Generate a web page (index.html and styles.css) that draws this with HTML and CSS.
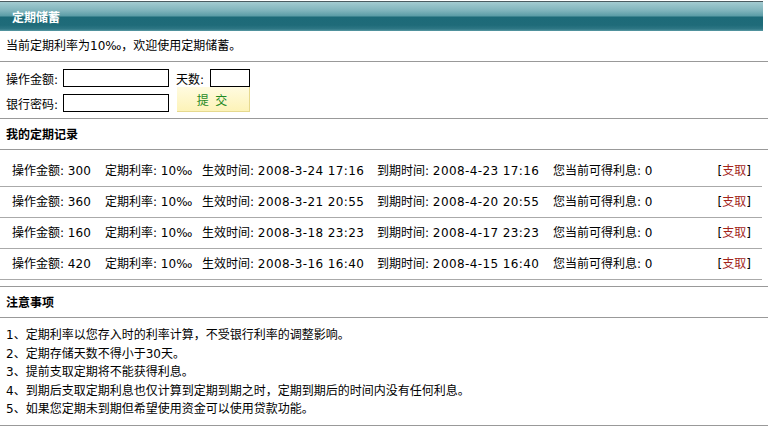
FILE: index.html
```html
<!DOCTYPE html>
<html lang="zh-CN">
<head>
<meta charset="utf-8">
<title>定期储蓄</title>
<link rel="stylesheet" href="styles.css">
</head>
<body>
<div class="page">
  <div class="title-bar"><span class="title-text">定期储蓄</span></div>
  <div class="intro">当前定期利率为10‰，欢迎使用定期储蓄。</div>
  <form class="deposit-form">
    <span class="label">操作金额:</span>
    <input class="field field-wide" type="text">
    <span class="days"><span class="label">天数:</span><input class="field field-small" type="text"></span>
    <span class="label row2">银行密码:</span>
    <input class="field field-wide row2" type="password">
    <button class="submit row2" type="button">提 交</button>
  </form>
  <div class="section-head">我的定期记录</div>
  <div class="records">
    <div class="record">
      <span>操作金额: 300</span><span>定期利率: 10‰</span><span>生效时间: <span class="num">2008-3-24 17:16</span></span><span>到期时间: <span class="num">2008-4-23 17:16</span></span><span>您当前可得利息: 0</span><span class="act">[<a href="#">支取</a>]</span>
    </div>
    <div class="record">
      <span>操作金额: 360</span><span>定期利率: 10‰</span><span>生效时间: <span class="num">2008-3-21 20:55</span></span><span>到期时间: <span class="num">2008-4-20 20:55</span></span><span>您当前可得利息: 0</span><span class="act">[<a href="#">支取</a>]</span>
    </div>
    <div class="record">
      <span>操作金额: 160</span><span>定期利率: 10‰</span><span>生效时间: <span class="num">2008-3-18 23:23</span></span><span>到期时间: <span class="num">2008-4-17 23:23</span></span><span>您当前可得利息: 0</span><span class="act">[<a href="#">支取</a>]</span>
    </div>
    <div class="record">
      <span>操作金额: 420</span><span>定期利率: 10‰</span><span>生效时间: <span class="num">2008-3-16 16:40</span></span><span>到期时间: <span class="num">2008-4-15 16:40</span></span><span>您当前可得利息: 0</span><span class="act">[<a href="#">支取</a>]</span>
    </div>
  </div>
  <div class="section-head">注意事项</div>
  <ol class="notes">
    <li>1、定期利率以您存入时的利率计算，不受银行利率的调整影响。</li>
    <li>2、定期存储天数不得小于30天。</li>
    <li>3、提前支取定期将不能获得利息。</li>
    <li>4、到期后支取定期利息也仅计算到定期到期之时，定期到期后的时间内没有任何利息。</li>
    <li>5、如果您定期未到期但希望使用资金可以使用贷款功能。</li>
  </ol>
</div>
</body>
</html>
```
FILE: styles.css
```css
html, body {
  margin: 0;
  padding: 0;
  background: #fff;
}
body {
  font-family: "DejaVu Sans", "Noto Sans CJK SC", sans-serif;
  font-size: 12px;
  color: #000;
}
.page {
  width: 768px;
  padding-top: 1px;
}
.title-bar {
  width: 763px;
  height: 30px;
  border-top: 1px solid #4b5b60;
  background: linear-gradient(to bottom, #a3cbd1 0%, #7fb3bb 30%, #5b9ca6 48%, #1d6a78 52%, #1f6b79 80%, #2e7785 93%, #5a9aa4 100%);
  display: flex;
  align-items: center;
  padding-left: 12px;
  box-sizing: border-box;
}
.title-text {
  color: #fff;
  font-weight: 700;
  font-family: "Noto Sans CJK SC", sans-serif;
  font-size: 12px;
}
.intro {
  height: 30px;
  line-height: 30px;
  padding-left: 6px;
  border-bottom: 1px solid #999;
}
.deposit-form {
  display: grid;
  grid-template-columns: 57px 106px 81px;
  grid-template-rows: 18px 25px;
  column-gap: 0;
  padding: 7px 0 6px 6px;
  margin: 0;
  border-bottom: 1px solid #999;
  align-items: center;
}
.label {
  white-space: nowrap;
}
.field {
  box-sizing: border-box;
  height: 18px;
  border: 1px solid #000;
  padding: 0;
  margin: 0;
  background: #fff;
}
.field-wide {
  width: 106px;
}
.field-small {
  width: 40px;
  margin-left: 6px;
}
.days {
  display: flex;
  align-items: center;
  padding-left: 7px;
}
.row2 {
  align-self: end;
}
.deposit-form .submit {
  margin-left: 8px;
  width: 73px;
  height: 25px;
  border: none;
  border-right: 1px solid #e6d98e;
  border-bottom: 1px solid #e6d98e;
  background: linear-gradient(to bottom, #fffbe0, #fdf3b8);
  color: #1f8a1f;
  font-family: "Noto Sans CJK SC", sans-serif;
  font-size: 12px;
  letter-spacing: 2px;
  padding: 0;
}
.section-head {
  height: 30px;
  line-height: 30px;
  padding-left: 6px;
  font-weight: 700;
  font-family: "Noto Sans CJK SC", sans-serif;
  border-bottom: 1px solid #999;
}
.records {
  padding: 6px 0;
  border-bottom: 1px solid #999;
}
.record {
  width: 762px;
  box-sizing: border-box;
  height: 31px;
  line-height: 30px;
  border-bottom: 1px solid #aaa;
  padding: 0 11px 0 12px;
  display: grid;
  grid-template-columns: 93px 97px 175px 176px 1fr auto;
  white-space: nowrap;
}
.num {
  letter-spacing: 0.4px;
}
.act a {
  color: #a3241a;
  text-decoration: none;
}
.notes {
  list-style: none;
  margin: 0;
  padding: 8px 0 6px 6px;
  line-height: 18.5px;
  border-bottom: 1px solid #999;
}
```
